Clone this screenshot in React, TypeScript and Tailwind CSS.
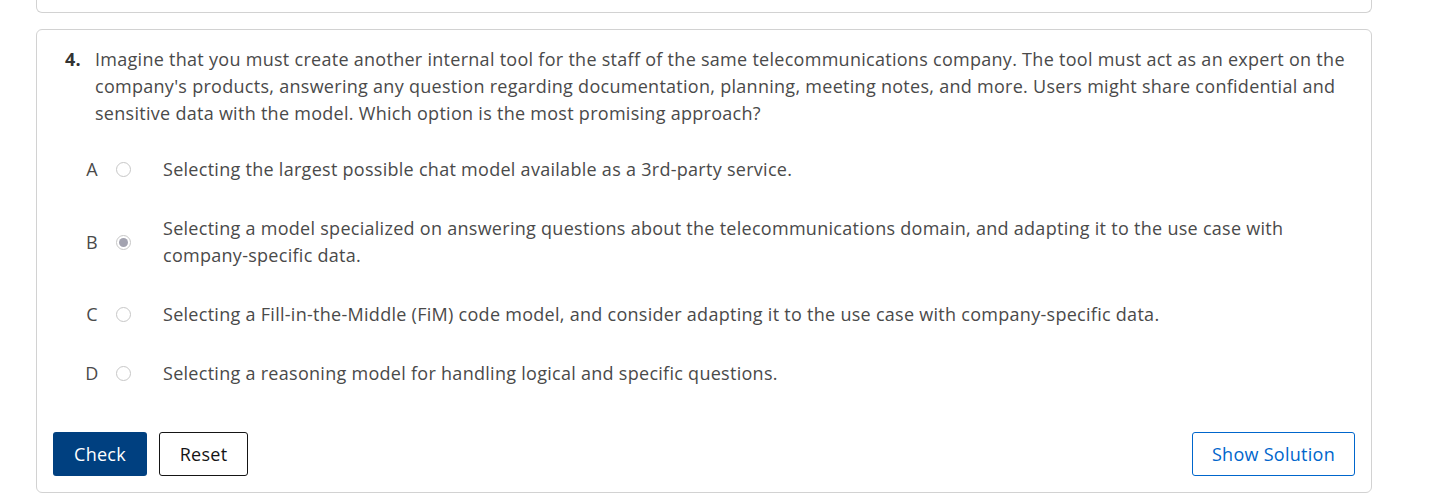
const options = [
  { letter: 'A', text: 'Selecting the largest possible chat model available as a 3rd-party service.' },
  {
    letter: 'B',
    text: 'Selecting a model specialized on answering questions about the telecommunications domain, and adapting it to the use case with company-specific data.',
    checked: true,
  },
  {
    letter: 'C',
    text: 'Selecting a Fill-in-the-Middle (FiM) code model, and consider adapting it to the use case with company-specific data.',
  },
  { letter: 'D', text: 'Selecting a reasoning model for handling logical and specific questions.' },
]

function Radio({ checked }: { checked?: boolean }) {
  return (
    <span className="flex h-[15px] w-[15px] shrink-0 items-center justify-center rounded-full border border-[#c7c7c7] bg-white">
      {checked && <span className="h-[9px] w-[9px] rounded-full bg-[#a3a3b0]" />}
    </span>
  )
}

export default function App() {
  return (
    <div
      className="min-h-screen bg-white px-[36px] text-[18px] leading-[27px] tracking-[0.28px] text-[#4a4a4a]"
      style={{ fontFamily: '"Open Sans", "Liberation Sans", sans-serif' }}
    >
      <div className="h-[13px] w-[1336px] rounded-b-[6px] border-x border-b border-[#d2d2d2]" />

      <div className="mt-[16px] w-[1336px] rounded-[6px] border border-[#d2d2d2] px-[16px] pt-[16px] pb-[16px]">
        <div className="flex pl-[12px]">
          <span className="w-[30px] shrink-0 font-bold text-[#333]">4.</span>
          <p className="w-[1252px]">
            Imagine that you must create another internal tool for the staff of the same telecommunications company. The
            tool must act as an expert on the company's products, answering any question regarding documentation,
            planning, meeting notes, and more. Users might share confidential and sensitive data with the model. Which
            option is the most promising approach?
          </p>
        </div>

        <div className="mt-[29px] flex flex-col gap-[32px]">
          {options.map((o) => (
            <div key={o.letter} className="flex items-center">
              <span className="w-[32px]" />
              <span className="w-[14px] text-center">{o.letter}</span>
              <span className="ml-[17px] mr-[32px]">
                <Radio checked={o.checked} />
              </span>
              <p className="w-[1140px]">{o.text}</p>
            </div>
          ))}
        </div>

        <div className="mt-[45px] flex items-center justify-between">
          <div className="flex gap-[12px]">
            <button className="h-[44px] w-[94px] rounded-[3px] bg-[#004080] text-white">Check</button>
            <button className="h-[44px] w-[89px] rounded-[3px] border border-[#151515] bg-white text-[#151515]">
              Reset
            </button>
          </div>
          <button className="h-[44px] w-[163px] rounded-[3px] border border-[#0066cc] bg-white text-[#0066cc]">
            Show Solution
          </button>
        </div>
      </div>
    </div>
  )
}
